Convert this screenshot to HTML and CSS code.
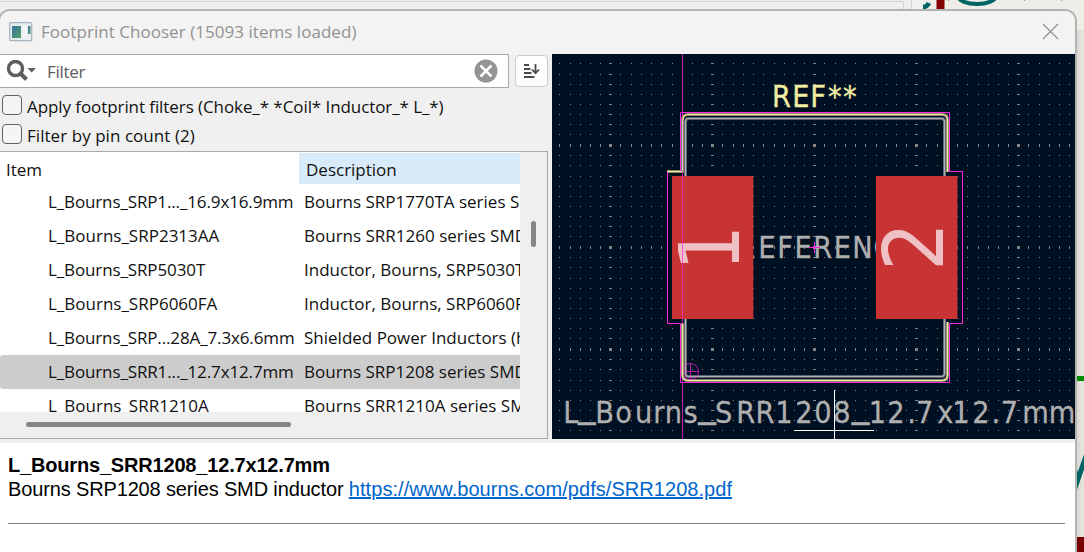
FILE: index.html
```
<!DOCTYPE html>
<html lang="en">
<head>
<meta charset="utf-8">
<title>Footprint Chooser</title>
<link rel="stylesheet" href="styles.css">
</head>
<body>
<svg class="backdrop" width="1084" height="552" viewBox="0 0 1084 552">
  <defs><linearGradient id="sh" x1="0" x2="1" y1="0" y2="0"><stop offset="0" stop-color="#d9d8d4"/><stop offset="1" stop-color="#e8e7e1"/></linearGradient></defs>
  <rect width="1084" height="552" fill="#eeede7"/>
  <rect x="1077" y="30" width="7" height="522" fill="url(#sh)"/>
  <rect width="923" height="12" fill="#efefef"/>
  <path d="M0 1.500H903.500V12M911.500 0V12" fill="none" stroke="#d2d2d2"/>
  <path d="M923 7Q927 7 929 3" fill="none" stroke="#006464" stroke-width="4.500"/>
  <rect x="936.500" width="8" height="12" fill="#840000"/>
  <ellipse cx="977" cy="-4" rx="19" ry="8" fill="none" stroke="#006464" stroke-width="4"/>
  <path d="M948 .5h1M1024 .5h1M1061 .5h1" stroke="#999"/>
  <rect x="1075" y="376" width="9" height="5" fill="#008c00"/>
  <path d="M1074 466L1077 482L1086 456" fill="none" stroke="#006464" stroke-width="5"/>
  <rect x="1075" y="537" width="9" height="15" fill="#780000"/>
</svg>
<main class="window">
  <header class="titlebar">
    <svg class="app-icon" width="24" height="20" viewBox="0 0 24 20">
      <defs><linearGradient id="ic" x1="0" x2="1" y1="0" y2="1"><stop stop-color="#3d70a0"/><stop offset="1" stop-color="#4ca263"/></linearGradient></defs>
      <rect x=".7" y=".7" width="22" height="18" rx="1" fill="#e9eef1" stroke="#a9b4bf" stroke-width="1.300"/>
      <rect x="3" y="4" width="9" height="12" fill="url(#ic)"/>
      <rect x="14" y="4" width="4" height="12" fill="#f5f5f5"/><rect x="19" y="4" width="2.500" height="8" fill="url(#ic)"/>
    </svg>
    <h1 class="title">Footprint Chooser (15093 items loaded)</h1>
    <svg class="close" width="17" height="17" viewBox="0 0 17 17"><path d="M1 1L16 16M16 1L1 16" stroke="#929292" stroke-width="1.300"/></svg>
  </header>
  <div class="body">
    <section class="left">
      <div class="search-row">
        <div class="search">
          <svg class="mag" width="30" height="22" viewBox="0 0 30 22"><circle cx="9.500" cy="8.500" r="7" fill="none" stroke="#5e5e5e" stroke-width="3.400"/><path d="M14.500 13.500L20.500 19.500" stroke="#5e5e5e" stroke-width="4"/><path d="M21.500 8H30L25.700 12.500Z" fill="#5e5e5e"/></svg>
          <span class="placeholder">Filter</span>
          <svg class="clear" width="24" height="24" viewBox="0 0 24 24"><circle cx="12" cy="12" r="11.500" fill="#949494"/><path d="M6.500 6.500L17.500 17.500M17.500 6.500L6.500 17.500" stroke="#fff" stroke-width="2.500"/></svg>
        </div>
        <div class="sort"><svg width="17" height="16" viewBox="0 0 17 16"><path d="M1 2H6M1 6H7.500M1 10H8.500M1 14H11.500" stroke="#4a4a4a" stroke-width="2"/><path d="M12.500 1V10M9 6.500L12.500 10.200L16 6.500" fill="none" stroke="#4a4a4a" stroke-width="1.800"/></svg></div>
      </div>
      <div class="check"><i class="box"></i><span class="check-a">Apply footprint filters (Choke_* *Coil* Inductor_* L_*)</span></div>
      <div class="check second"><i class="box"></i><span class="check-b">Filter by pin count (2)</span></div>
      <div class="table">
        <div class="content">
          <div class="row head"><span class="item">Item</span><span class="desc">Description</span></div>
          <div class="row"><span class="item tight">L_Bourns_SRP1..._16.9x16.9mm</span><span class="desc">Bourns SRP1770TA series SMD</span></div>
          <div class="row"><span class="item">L_Bourns_SRP2313AA</span><span class="desc">Bourns SRR1260 series SMD</span></div>
          <div class="row"><span class="item narrow">L_Bourns_SRP5030T</span><span class="desc">Inductor, Bourns, SRP5030T</span></div>
          <div class="row"><span class="item">L_Bourns_SRP6060FA</span><span class="desc">Inductor, Bourns, SRP6060FA</span></div>
          <div class="row"><span class="item tight">L_Bourns_SRP...28A_7.3x6.6mm</span><span class="desc">Shielded Power Inductors (https</span></div>
          <div class="row selected"><span class="item tight">L_Bourns_SRR1..._12.7x12.7mm</span><span class="desc">Bourns SRP1208 series SMD</span></div>
          <div class="row"><span class="item">L_Bourns_SRR1210A</span><span class="desc">Bourns SRR1210A series SMD</span></div>
        </div>
        <div class="vbar"><i></i></div>
        <div class="hbar"><i></i></div>
      </div>
    </section>
    <svg class="preview" width="523" height="385" viewBox="552 54 523 385">
      <rect x="552" y="54" width="523" height="385" fill="#001023"/>
      <g id="grid-dots" fill="#858585" shape-rendering="crispEdges"></g>
      <text class="cad grey" transform="translate(564 422.500) scale(.88 1)" x="-.8 15.900 35.600 58.200 80.700 101.400 114.500 135.800 152.600 171.500 195.800 217.700 240.100 262.800 284.300 305.900 326.900 346.300 367.400 390.200 400.100 424.100 441.300 464 485.700 496.400 520.700 550.900" y="0 -7.500 0 0 0 0 0 0 -7.500 0 0 0 0 0 0 0 -7.500 0 0 0 0 0 0 0 0 0 0 0">L<tspan class="bar">_</tspan>Bourns<tspan class="bar">_</tspan>SRR1208<tspan class="bar">_</tspan>12.7x12.7mm</text>
      <text class="cad grey" transform="translate(732 257.500) scale(.88 1)" x="4.900 29.900 51.500 71.100 92.400 115.500 136.700 160.800 182">REFERENCE</text>
      <text class="cad silk" transform="translate(772 106.500) scale(.88 1)" x="0 23.100 43.500 63.600 80.700">REF**</text>
      <rect x="685.500" y="118.500" width="259" height="258" rx="3" fill="none" stroke="#5c6370" stroke-width="3"/>
      <rect x="685.500" y="118.500" width="259" height="258" rx="3" fill="none" stroke="#afafaf" stroke-width="1.200"/>
      <g fill="none">
        <path d="M667 171.500H682.500V120Q682.500 114.500 688 114.500H942Q947.500 114.500 947.500 120V172M682.500 323V375Q682.500 380.500 688 380.500H942Q947.500 380.500 947.500 375V322" stroke="#8a8767" stroke-width="3"/>
        <path d="M680.500 171V112.500H949.500V171.500H962.500V323.500H949.500V382.500H680.500V323.500H667.500V172" stroke="#ff26e2"/>
      </g>
      <path d="M672 176H753.300V319H672ZM876 176H957.500V319H876Z" fill="#c83434"/>
      <text class="pad" transform="translate(739 271) rotate(-90)" textLength="46" lengthAdjust="spacingAndGlyphs">1</text>
      <text class="pad" transform="translate(943 271) rotate(-90)" textLength="49" lengthAdjust="spacingAndGlyphs">2</text>
      <g fill="none" stroke="#ff26e2">
        <path d="M682.500 54V439" opacity=".7"/>
        <path d="M809 247.500H820M814.500 242V253"/>
        <g opacity=".7"><circle cx="690.500" cy="371.500" r="8"/><path d="M682 371.500H699M690.500 363V380"/></g>
      </g>
      <path d="M667 171.500H682M683 120Q683 114.500 688 114.500H942Q947.500 114.500 947.500 120V172M682.500 324V375Q682.500 380.500 688 380.500H942Q947.500 380.500 947.500 375V322" fill="none" stroke="#f2eda1" stroke-width="1.200"/>
      <path d="M682.500 120V171" stroke="#e9b3dc"/>
      <path d="M794 430.500H874M834.500 390V439" stroke="#fff"/>
    </svg>
  </div>
  <footer class="details">
    <strong class="name">L_Bourns_SRR1208_12.7x12.7mm</strong>
    <p class="summary">Bourns SRP1208 series SMD inductor <a class="link">https://www.bourns.com/pdfs/SRR1208.pdf</a></p>
    <hr class="rule">
  </footer>
</main>
<script src="grid.js"></script>
</body>
</html>
```
FILE: grid.js
```
// Fill the preview with grid dots; every tenth dot is drawn larger.
const xs = [0, 10, 21, 31, 41, 51, 62, 72, 82, 92];
const ys = [0, 10, 20, 31, 41, 51, 61, 71, 81, 91];
const layer = document.getElementById('grid-dots');
let out = '';
for (let gx = 508; gx < 1075; gx += 102) {
  for (let gy = 43; gy < 439; gy += 102) {
    xs.forEach((dx, i) => ys.forEach((dy, j) => {
      const w = i ? 1 : 3, h = j ? 1 : 3;
      out += `<rect x="${gx + dx - (w - 1) / 2}" y="${gy + dy - (h - 1) / 2}" width="${w}" height="${h}"/>`;
    }));
  }
}
layer.innerHTML = out;
```
FILE: styles.css
```
* { box-sizing: border-box; }
body { margin: 0; width: 1084px; height: 552px; overflow: hidden; position: relative; font-family: "Open Sans", "Noto Sans", sans-serif; font-size: 17px; color: #111; }
.backdrop { position: absolute; left: 0; top: 0; }
.window { position: absolute; left: -2px; top: 9px; width: 1079px; height: 560px; border: 2px solid #b3b3b1; border-radius: 12px 12px 0 0; background: #f0f0f0; overflow: hidden; display: flex; flex-direction: column; }
.titlebar { height: 43px; background: #f3f3f3; display: flex; align-items: center; padding: 0 16px 2px 9px; flex: none; }
.title { margin: 0 auto 0 8px; font-size: 17px; font-weight: 400; letter-spacing: .04px; color: #929292; white-space: nowrap; }
.body { display: flex; height: 385px; flex: none; }
.left { width: 552px; }
.search-row { display: flex; height: 34px; }
.search { width: 509px; height: 34px; background: #fff; border: 1px solid #a9a9ad; border-left: 0; display: flex; align-items: center; padding: 0 10px 0 6px; }
.placeholder { margin: 0 auto 0 11px; color: #5c5c5c; letter-spacing: -.3px; }
.sort { width: 33px; height: 32px; margin: 1px 0 0 6px; background: #fdfdfd; border: 1px solid #ccc; border-radius: 4px; display: flex; align-items: center; justify-content: center; }
.check { display: flex; align-items: center; height: 29px; margin-top: 4px; padding-left: 2px; white-space: nowrap; }
.check.second { margin-top: 0; }
.check-a { letter-spacing: -.08px; }
.check-b { letter-spacing: .05px; }
.box { width: 20px; height: 20px; border: 1px solid #626262; border-radius: 4px; background: #f5f5f5; margin: -3px 5px 0 0; flex: none; }
.table { width: 548px; height: 288px; margin-top: 1px; background: #efefef; border: 1px solid #a9a9ad; border-left: 0; display: grid; grid-template: 260px 26px / 520px 27px; }
.content { background: #fff; overflow: hidden; }
.row { display: flex; height: 34px; line-height: 34px; white-space: nowrap; }
.item { width: 304px; padding-left: 48px; flex: none; }
.tight { letter-spacing: -.13px; }
.narrow { letter-spacing: -.12px; }
.desc { width: 216px; overflow: hidden; flex: none; }
.head { height: 33px; padding-top: 1px; }
.head .item { width: 299px; padding-left: 6px; }
.head .desc { width: 221px; height: 31px; background: #d9ebf9; padding-left: 7px; }
.selected { background: #ccc; border-radius: 3px 0 0 3px; }
.vbar i { display: block; width: 5px; height: 26px; border-radius: 3px; background: #868686; margin: 69px 0 0 11px; }
.hbar i { display: block; width: 265px; height: 5px; border-radius: 3px; background: #868686; margin: 10px 0 0 26px; }
.cad { font-family: "DejaVu Sans", sans-serif; font-size: 31px; stroke-width: .3px; }
.grey { fill: #afafaf; stroke: #afafaf; }
.silk { fill: #f2eda1; stroke: #f2eda1; }
.bar { font-size: 40px; }
.pad { font-family: "DejaVu Sans", sans-serif; font-size: 84px; fill: #efc0c4; }
.details { margin-top: 4px; background: #fff; height: 130px; padding: 10px 10px 0 8px; font: 20px/24px "Liberation Sans", sans-serif; color: #000; }
.name { display: block; letter-spacing: -.18px; }
.summary { margin: 0; letter-spacing: -.14px; }
.link { color: #0066cc; text-decoration: underline; letter-spacing: .05px; }
.rule { margin: 22px 0 0; border: 0; height: 1px; background: #808080; }
```
